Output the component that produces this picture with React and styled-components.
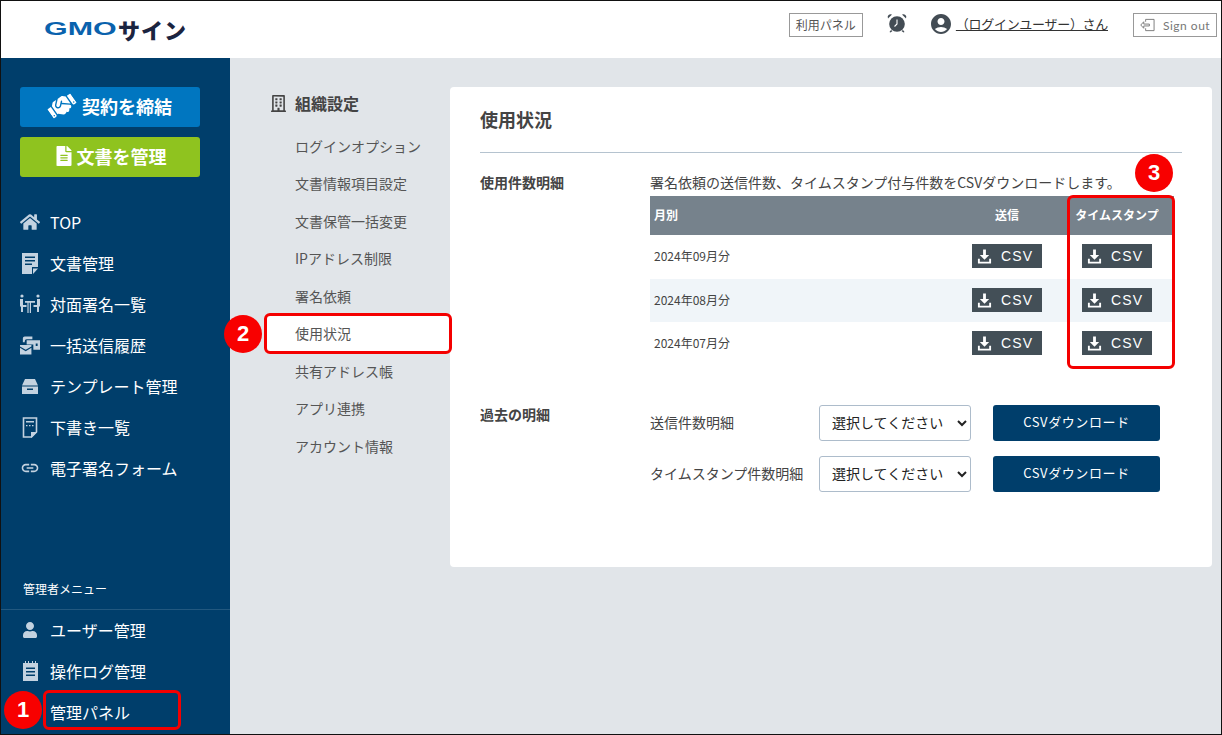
import React from 'react'
import styled, { createGlobalStyle } from 'styled-components'
import { FaHandshake, FaFileAlt, FaHome, FaRegBuilding, FaUser } from 'react-icons/fa'
import { MdAccountCircle, MdLink } from 'react-icons/md'

const Global = createGlobalStyle`
	* { box-sizing: border-box; }
	html, body { margin: 0; padding: 0; }
	body {
		font-family: "Noto Sans CJK JP", "Noto Sans", sans-serif;
		color: #444;
	}
`

const DocIcon = () => (
	<svg width="16" height="21" viewBox="0 0 16 21">
		<path fill="currentColor" fillRule="evenodd" d="M0 0h16v14h-6v7H0zM3 3.500v1.600h10V3.500zM3 7v1.600h10V7zM3 10.500v1.600h7v-1.600z" />
		<path fill="currentColor" d="M11 15.500h5L11 21z" />
	</svg>
)

const FaceIcon = () => (
	<svg width="20" height="20" viewBox="0 0 20 20" fill="currentColor">
		<circle cx="2" cy="2" r="1.600" />
		<circle cx="18" cy="2" r="1.600" />
		<path d="M0 5h3v6h3.500v2H3v5H1v-5.500H0zM20 5h-3v6h-3.500v2H17v5h2v-5.500h1z" />
		<path d="M5 7h10v1.800h-4V19H9.800V8.800H8.600V19H7.400V8.800H5z" />
	</svg>
)

const SendIcon = () => (
	<svg width="21" height="20" viewBox="0 0 21 20" fill="currentColor">
		<path d="M3 3a2 2 0 0 1 2-2h8v3H7a2 2 0 0 0-2 2v1H3z" />
		<path fillRule="evenodd" d="M7 5h14v10h-7V9.500H7zM16.500 8.500v2.500h2V8.500z" />
		<path d="M0 10h12v1.500L6 15 0 11.500zM0 13l6 3.500L12 13v7H0z" />
	</svg>
)

const TrayIcon = () => (
	<svg width="16" height="17" viewBox="0 0 16 17" fill="currentColor">
		<path d="M3 1h10l3 6.500H0z" />
		<path fillRule="evenodd" d="M0 8.500h16V16H0zM5 10.500V12h6v-1.500z" />
	</svg>
)

const DraftIcon = () => (
	<svg width="16" height="21" viewBox="0 0 16 21">
		<path fill="none" stroke="currentColor" strokeWidth="1.600" d="M1.500 1h13v14l-5 5h-8z" />
		<path fill="currentColor" d="M4 4h8v1.500H4zM4 8h1.500v1.200H4zM7 8h1.500v1.200H7zM10 8h1.500v1.200H10z" />
		<path fill="currentColor" d="M9 15h6l-6 6z" />
	</svg>
)

const LogIcon = () => (
	<svg width="15" height="20" viewBox="0 0 15 20">
		<path fill="currentColor" fillRule="evenodd" d="M0 2h15v18H0zM3 6.500V8h9V6.500zM3 10v1.500h9V10zM3 13.500V15h9v-1.500z" />
		<path fill="currentColor" d="M2 0h1v3H2zM5 0h1v3H5zM9 0h1v3H9zM12 0h1v3h-1z" />
	</svg>
)

const AlarmIcon = () => (
	<svg width="20" height="20" viewBox="0 0 20 20">
		<circle cx="10" cy="11" r="7.800" fill="#434c54" />
		<path fill="#434c54" d="M1 5.500 5 1.500a3 3 0 0 0-4 4zM19 5.500l-4-4a3 3 0 0 1 4 4zM4 17l-1.500 2 1 .6L5.500 18zM16 17l1.500 2-1 .6-2-1.600z" />
		<path stroke="#fff" strokeWidth="1.100" fill="none" d="M10 6.500V11l-2.500 2.500" />
	</svg>
)

const SignOutIcon = () => (
	<svg width="15" height="14" viewBox="0 0 16 14" fill="none" stroke="#777" strokeWidth="1">
		<path d="M6 3.500V1h9v12H6v-2.500" />
		<path d="M10 6H4V3.500L.8 7 4 10.500V8h6z" />
	</svg>
)

const DownloadIcon = () => (
	<svg width="15" height="16" viewBox="0 0 16 16" fill="#fff">
		<path d="M6.500 1h3v6H13l-5 5-5-5h3.500z" />
		<path d="M1 11h2v3h10v-3h2v5H1z" />
	</svg>
)

const mainNav = [
	{ label: 'TOP', icon: <FaHome size={20} /> },
	{ label: '文書管理', icon: <DocIcon /> },
	{ label: '対面署名一覧', icon: <FaceIcon /> },
	{ label: '一括送信履歴', icon: <SendIcon /> },
	{ label: 'テンプレート管理', icon: <TrayIcon /> },
	{ label: '下書き一覧', icon: <DraftIcon /> },
	{ label: '電子署名フォーム', icon: <MdLink size={22} /> },
]

const adminNav = [
	{ label: 'ユーザー管理', icon: <FaUser size={16} /> },
	{ label: '操作ログ管理', icon: <LogIcon /> },
	{ label: '管理パネル' },
]

const subNav = ['ログインオプション', '文書情報項目設定', '文書保管一括変更', 'IPアドレス制限', '署名依頼', '使用状況', '共有アドレス帳', 'アプリ連携', 'アカウント情報']
const months = ['2024年09月分', '2024年08月分', '2024年07月分']

const CsvButton = () => (
	<DownloadButton>
		<DownloadIcon />
		<span>CSV</span>
	</DownloadButton>
)

const App = () => {
	function renderNav(items) {
		return items.map(item => (
			<NavItem key={ item.label }>
				<NavIcon>{ item.icon }</NavIcon>
				{ item.label }
			</NavItem>
		))
	}

	return (
		<Frame>
			<Global />
			<Header>
				<Logo>
					<LogoGmo>GMO</LogoGmo>
					<LogoSign>サイン</LogoSign>
				</Logo>
				<HeaderRight>
					<PanelLink>利用パネル</PanelLink>
					<AlarmWrap><AlarmIcon /></AlarmWrap>
					<UserLink>
						<MdAccountCircle size={24} color="#434c54" />
						<UserName>（ログインユーザー）さん</UserName>
					</UserLink>
					<SignOut>
						<SignOutIcon />
						<span>Sign out</span>
					</SignOut>
				</HeaderRight>
			</Header>
			<Body>
				<Sidebar>
					<ActionButton $bg="#0076c0" $gap="6px">
						<HandIcon><FaHandshake size={28} /></HandIcon>
						契約を締結
					</ActionButton>
					<ActionButton $bg="#8fc31f" $gap="3px">
						<FaFileAlt size={20} />
						文書を管理
					</ActionButton>
					<MainNav>{ renderNav(mainNav) }</MainNav>
					<AdminLabel>管理者メニュー</AdminLabel>
					<AdminNav>{ renderNav(adminNav) }</AdminNav>
				</Sidebar>
				<SubMenu>
					<SubTitle>
						<FaRegBuilding size={17} />
						組織設定
					</SubTitle>
					{ subNav.map(name => (
						<SubItem key={ name } $active={ name === '使用状況' }>{ name }</SubItem>
					)) }
				</SubMenu>
				<Card>
					<CardTitle>使用状況</CardTitle>
					<Section>
						<SectionLabel>使用件数明細</SectionLabel>
						<div>
							<Description>署名依頼の送信件数、タイムスタンプ付与件数をCSVダウンロードします。</Description>
							<Table>
								<HeadRow>
									<HeadCell $align="left">月別</HeadCell>
									<HeadCell>送信</HeadCell>
									<HeadCell>タイムスタンプ</HeadCell>
								</HeadRow>
								{ months.map(month => (
									<Row key={ month }>
										<MonthCell>{ month }</MonthCell>
										<ButtonCell><CsvButton /></ButtonCell>
										<ButtonCell><CsvButton /></ButtonCell>
									</Row>
								)) }
							</Table>
						</div>
					</Section>
					<PastSection>
						<PastTitle>過去の明細</PastTitle>
						<PastRows>
							<PastRow>
								<PastLabel>送信件数明細</PastLabel>
								<Select><option>選択してください</option></Select>
								<DownloadWide>CSVダウンロード</DownloadWide>
							</PastRow>
							<PastRow>
								<PastLabel>タイムスタンプ件数明細</PastLabel>
								<Select><option>選択してください</option></Select>
								<DownloadWide>CSVダウンロード</DownloadWide>
							</PastRow>
						</PastRows>
					</PastSection>
				</Card>
			</Body>

			<RedBox $x={43} $y={690} $w={138} $h={40} />
			<RedBox $x={264} $y={313} $w={188} $h={41} />
			<RedBox $x={1067} $y={195} $w={108} $h={174} />
			<Marker $x={4} $y={691}>1</Marker>
			<Marker $x={224} $y={315}>2</Marker>
			<Marker $x={1135} $y={154}>3</Marker>
		</Frame>
	)
}

export default App

const Frame = styled.div`
	position: relative;
	width: 1222px;
	height: 735px;
	border: 1px solid #111;
	display: flex;
	flex-direction: column;
	overflow: hidden;
	background: #fff;
`

const Header = styled.header`
	height: 57px;
	flex-shrink: 0;
	display: flex;
	justify-content: space-between;
	padding-left: 43px;
	padding-right: 4px;
	background: #fff;
`

const Logo = styled.div`
	display: flex;
	align-items: center;
	height: 55px;
`

const LogoGmo = styled.span`
	display: inline-block;
	width: 74px;
	font-family: "Liberation Sans", sans-serif;
	font-weight: 700;
	font-size: 19px;
	color: #0a62ad;
	transform: scaleX(1.6);
	transform-origin: left center;
`

const LogoSign = styled.span`
	font-weight: 900;
	font-size: 22px;
	line-height: 1;
	color: #1b2440;
	letter-spacing: 1px;
`

const HeaderRight = styled.div`
	display: flex;
	align-items: flex-start;
	padding-top: 12px;
`

const PanelLink = styled.div`
	width: 74px;
	height: 24px;
	border: 1px solid #999;
	font-size: 12px;
	line-height: 22px;
	text-align: center;
	color: #555;
`

const AlarmWrap = styled.div`
	margin-left: 24px;
	height: 22px;
`

const UserLink = styled.div`
	display: flex;
	align-items: center;
	height: 22px;
	margin-left: 22px;
`

const UserName = styled.span`
	margin-left: 3px;
	margin-right: 25px;
	font-size: 13px;
	line-height: 20px;
	letter-spacing: -0.3px;
	color: #333;
	text-decoration: underline;
`

const SignOut = styled.div`
	width: 84px;
	height: 24px;
	display: flex;
	align-items: center;
	gap: 8px;
	padding-left: 6px;
	border: 1px solid #999;
	font-family: "Lato", sans-serif;
	font-size: 12px;
	letter-spacing: 0.5px;
	color: #777;
`

const Body = styled.div`
	flex: 1;
	display: flex;
	min-height: 0;
	background: #e1e5e9;
`

const Sidebar = styled.aside`
	width: 229px;
	flex-shrink: 0;
	display: flex;
	flex-direction: column;
	padding-top: 29px;
	background: #003e6b;
	color: #fff;
`

const ActionButton = styled.div`
	width: 180px;
	height: 40px;
	flex-shrink: 0;
	margin-left: 19px;
	margin-bottom: 10px;
	padding-bottom: 2px;
	display: flex;
	align-items: center;
	justify-content: center;
	gap: ${ props => props.$gap };
	border-radius: 3px;
	background: ${ props => props.$bg };
	font-size: 18px;
	font-weight: 700;
	color: #fff;
`

const HandIcon = styled.span`
	display: flex;
	transform: rotate(-35deg);
`

const MainNav = styled.nav`
	margin-top: 15px;
`

const NavItem = styled.div`
	height: 41px;
	display: flex;
	align-items: center;
	padding-left: 19px;
	padding-bottom: 1px;
	font-size: 16px;
	color: #fff;
`

const NavIcon = styled.span`
	width: 20px;
	margin-right: 10px;
	display: flex;
	justify-content: center;
	color: #c3d2e0;
`

const AdminLabel = styled.div`
	margin-top: auto;
	height: 40px;
	padding-left: 22px;
	font-size: 12px;
	line-height: 38px;
	border-bottom: 1px solid #22587f;
`

const AdminNav = styled.nav`
	padding-bottom: 1px;
`

const SubMenu = styled.div`
	width: 220px;
	flex-shrink: 0;
	padding-top: 29px;
`

const SubTitle = styled.div`
	height: 32px;
	margin-bottom: 8.500px;
	display: flex;
	align-items: center;
	gap: 8px;
	padding-left: 40px;
	font-size: 16px;
	font-weight: 700;
	color: #444;

	svg {
		margin-top: 1px;
	}
`

const SubItem = styled.div`
	width: 186px;
	height: 37.500px;
	margin-left: 36px;
	padding-left: 29px;
	font-size: 14px;
	line-height: 36.500px;
	color: #555;
	background: ${ props => props.$active ? '#fff' : 'transparent' };
`

const Card = styled.main`
	width: 762px;
	height: 480px;
	margin-top: 29px;
	padding: 0 30px;
	background: #fff;
	border-radius: 4px;
`

const CardTitle = styled.h1`
	margin: 0;
	height: 66px;
	padding-top: 18px;
	font-size: 18px;
	line-height: 28px;
	font-weight: 700;
	color: #444;
	border-bottom: 1px solid #b5c3cf;
`

const Section = styled.section`
	display: grid;
	grid-template-columns: 170px 1fr;
	padding-top: 19px;
`

const SectionLabel = styled.div`
	font-size: 14px;
	font-weight: 700;
	line-height: 20px;
	color: #444;
`

const PastTitle = styled(SectionLabel)`
	line-height: 18px;
`

const Description = styled.div`
	font-size: 14px;
	line-height: 20px;
	margin-bottom: 4px;
	color: #444;
	white-space: nowrap;
`

const Table = styled.div`
	width: 524px;
`

const HeadRow = styled.div`
	height: 39px;
	display: grid;
	grid-template-columns: 1fr 110px 110px;
	align-items: center;
	padding-right: 2px;
	background: #76828c;
`

const HeadCell = styled.div`
	padding-left: ${ props => props.$align === 'left' ? '4px' : '0' };
	padding-bottom: 3px;
	text-align: ${ props => props.$align || 'center' };
	font-size: 12px;
	font-weight: 700;
	color: #fff;
`

const Row = styled.div`
	height: 43px;
	display: grid;
	grid-template-columns: 1fr 110px 110px;
	align-items: center;
	padding-right: 2px;
	padding-bottom: 1px;

	&:nth-child(2) {
		height: 44px;
		padding-bottom: 2px;
	}

	&:nth-child(3) {
		background: #f0f5f9;
	}
`

const MonthCell = styled.div`
	padding-left: 4px;
	padding-bottom: 2px;
	font-size: 12px;
	color: #444;
`

const ButtonCell = styled.div`
	display: flex;
	padding-left: 20px;
`

const DownloadButton = styled.div`
	width: 70px;
	height: 24px;
	display: flex;
	align-items: center;
	gap: 9px;
	padding-left: 5px;
	background: #434f57;
	font-family: "Liberation Sans", sans-serif;
	font-size: 14px;
	letter-spacing: 1.200px;
	color: #fff;
`

const PastSection = styled.section`
	display: grid;
	grid-template-columns: 170px 1fr;
	margin-top: 40px;
`

const PastRows = styled.div`
	display: flex;
	flex-direction: column;
	gap: 15px;
`

const PastRow = styled.div`
	display: flex;
	align-items: center;
	height: 36px;
`

const PastLabel = styled.div`
	width: 169px;
	font-size: 14px;
	color: #444;
	padding-bottom: 3px;
`

const Select = styled.select`
	width: 152px;
	height: 36px;
	margin-right: 22px;
	padding: 0 8px 2px;
	border: 1px solid #adbccb;
	border-radius: 3px;
	background: #fff;
	font-family: "Noto Sans CJK JP", sans-serif;
	font-size: 14px;
	color: #222;
`

const DownloadWide = styled.div`
	width: 167px;
	height: 36px;
	border-radius: 3px;
	background: #003e6b;
	font-size: 13px;
	line-height: 33px;
	letter-spacing: 0.6px;
	text-align: center;
	color: #fff;
`

const RedBox = styled.div`
	position: absolute;
	left: ${ props => props.$x - 1 }px;
	top: ${ props => props.$y - 1 }px;
	width: ${ props => props.$w }px;
	height: ${ props => props.$h }px;
	border: 3px solid #f40000;
	border-radius: 6px;
`

const Marker = styled.div`
	position: absolute;
	left: ${ props => props.$x - 1 }px;
	top: ${ props => props.$y - 1 }px;
	width: 38px;
	height: 38px;
	border-radius: 50%;
	background: #f80000;
	font-family: "Liberation Sans", sans-serif;
	font-size: 22px;
	font-weight: 700;
	line-height: 37px;
	text-align: center;
	color: #fff;
`
